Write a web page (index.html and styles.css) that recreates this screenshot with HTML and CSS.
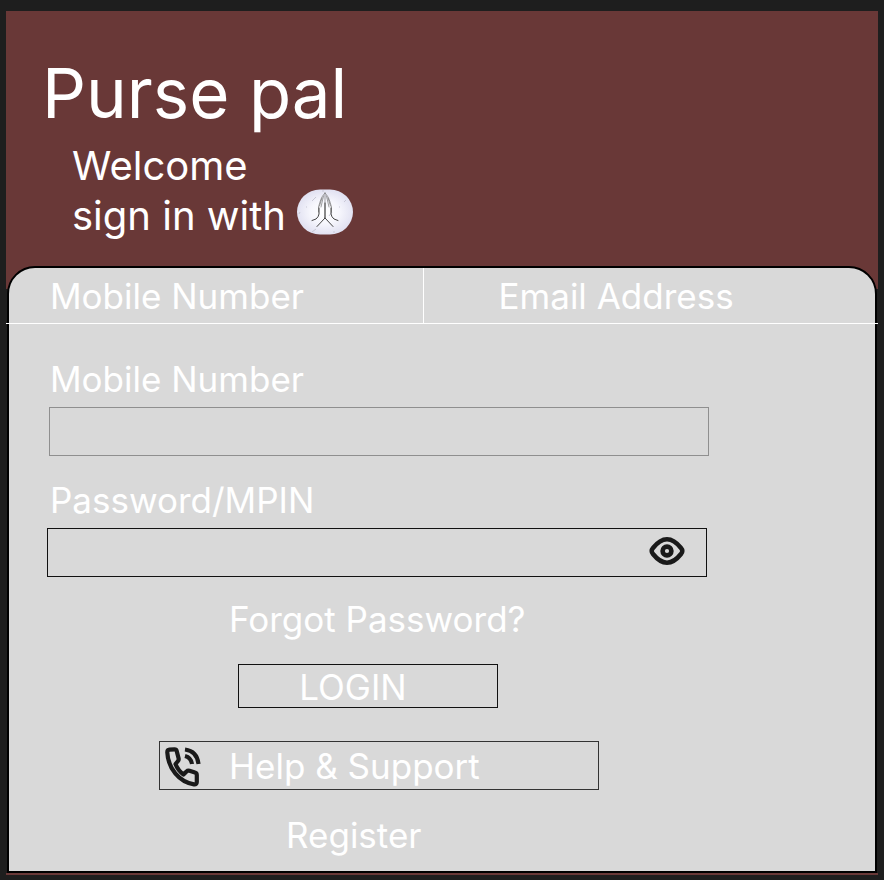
FILE: index.html
```html
<!DOCTYPE html>
<html lang="en">
<head>
<meta charset="utf-8">
<meta name="viewport" content="width=device-width, initial-scale=1">
<title>Purse pal</title>
<link rel="stylesheet" href="styles.css">
</head>
<body>
<div class="screen">
  <header class="hero">
    <h1 class="brand">Purse pal</h1>
    <p class="welcome">Welcome<br>sign in with
      <svg class="namaste" viewBox="0 0 56 46" aria-hidden="true">
        <defs>
          <radialGradient id="glow"><stop offset="0" stop-color="#fff"/><stop offset=".5" stop-color="#f7f7fd"/><stop offset="1" stop-color="#e2e2f2"/></radialGradient>
        </defs>
        <rect width="56" height="45" y=".5" rx="23" ry="22.500" fill="url(#glow)"/>
        <path d="M15 12l4-4M15 43l4-3M32 27l3-4M47 13l2-2M9 18h1M42 18h1M36 43h2M25 2h2M2 25l1-2" fill="none" stroke="#c9c9d6"/>
        <g fill="none" stroke-linecap="round" stroke-linejoin="round">
          <path d="M28 4V29M28 4C26 6 24 9 23 13L21.500 18V23M28 4C30 6 32 9 33 13L34.500 18V23M26.500 7L24 18M29.500 7L32 18M25 9L22.500 17M31 9L33.500 17" stroke="#777" stroke-width=".7"/>
          <path d="M22 19V25Q21.500 28 19 30L15 31.500M34 19V25Q34.500 28 37 30L41 31.500M28 14V29L20 37.500M28 29L36 37.500" stroke="#444"/>
        </g>
      </svg>
    </p>
  </header>
  <main class="panel">
    <div class="tabs">
      <button class="tab" type="button">Mobile Number</button>
      <button class="tab tab-email" type="button">Email Address</button>
    </div>
    <form class="form">
      <label class="label" for="mobile">Mobile Number</label>
      <input class="field field-mobile" id="mobile" type="tel">
      <label class="label" for="password">Password/MPIN</label>
      <div class="password">
        <input class="field" id="password" type="password">
        <button class="reveal" type="button" aria-label="Show password">
          <svg viewBox="0 0 36 28" width="36" height="28" fill="none" stroke="#1a1a1a" stroke-width="4.600" stroke-linejoin="round">
            <path d="M2.700 14Q2.700 12.500 4 11C8 6 13 2.300 18 2.300S28 6 32 11Q33.300 12.500 33.300 14T32 17C28 22 23 25.700 18 25.700S8 22 4 17Q2.700 15.500 2.700 14Z"/>
            <circle cx="18" cy="14" r="4.400"/>
          </svg>
        </button>
      </div>
      <a class="link forgot" href="#">Forgot Password?</a>
      <button class="login" type="submit">LOGIN</button>
      <button class="help" type="button">
        <svg viewBox="0 0 36 42" width="36" height="42" fill="none" stroke="#1a1a1a" stroke-width="4.200" stroke-linejoin="round" aria-hidden="true">
          <path d="M4.500 4.600L9.500 4.300Q11.300 4.300 11.700 6L13.500 13Q14 14.800 13 16L10.500 19Q13 25.500 18.500 29.500L21.500 26.500Q22.800 25.300 24.500 25.800L30 27.500Q31.800 28 31.800 30V37Q31.800 39.600 29 39.300C14 37 3 23 2.300 7.500Q2.200 4.800 4.500 4.600Z"/>
          <path d="M20 4.500Q32 6 33.500 19M20 11Q26 12.500 27 19"/>
        </svg>
        <span>Help &amp; Support</span>
      </button>
      <a class="link register" href="#">Register</a>
    </form>
  </main>
</div>
</body>
</html>
```
FILE: styles.css
```css
* {
  box-sizing: border-box;
}

body {
  margin: 0;
  background: #1e1e1e;
  color: #fff;
  font-family: Inter, "Liberation Sans", sans-serif;
  font-size: 35px;
  line-height: 44px;
}

button,
input {
  padding: 0;
  border: 0;
  border-radius: 0;
  background: none;
  color: inherit;
  font: inherit;
}

.screen {
  margin: 11px 6px 4px;
  border-bottom: 2px solid #693837;
}

.hero {
  padding: 40px 40px 48px 36px;
  background: #693837;
}

.brand {
  margin: 0;
  font-size: 69px;
  font-weight: 400;
  line-height: 84px;
}

.welcome {
  margin: 0 0 0 30px;
  padding-top: 6px;
  font-size: 40px;
  line-height: 50px;
}

.namaste {
  width: 56px;
  height: 46px;
  margin: -4px 0;
  vertical-align: -1px;
}

.panel {
  margin: -23px 1px 0;
  border: 2px solid #000;
  border-radius: 28px 28px 0 0;
  background: #d9d9d9;
}

.tabs {
  display: flex;
  margin: 0 -3px;
  border-bottom: 1px solid #fff;
}

.tab {
  flex: 0 0 calc(48% - 2px);
  height: 55px;
  padding-left: 44px;
  text-align: left;
}

.tab-email {
  flex: 1;
  padding-left: 75px;
  border-left: 1px solid #fff;
}

.form {
  display: flex;
  flex-direction: column;
  padding: 33px 168px 14px 38px;
}

.label {
  padding-left: 3px;
}

.field {
  width: 100%;
  height: 49px;
  padding: 0 12px;
  border: 1px solid #111;
}

.field-mobile {
  width: auto;
  margin: 6px -2px 22px 2px;
  border-color: #8f8f8f;
}

.password {
  position: relative;
  margin-top: 6px;
}

.password .field {
  display: block;
  padding-right: 64px;
}

.reveal {
  position: absolute;
  top: 9px;
  right: 22px;
  height: 28px;
  line-height: 0;
}

.link {
  color: inherit;
  text-decoration: none;
}

.forgot {
  margin: 20px 0 0 182px;
}

.login {
  width: 260px;
  height: 44px;
  margin: 23px 0 0 191px;
  padding: 0 30px 4px 0;
  border: 1px solid #111;
}

.help {
  display: flex;
  align-items: center;
  align-self: center;
  gap: 28px;
  width: 440px;
  height: 49px;
  margin: 33px 0 23px 4px;
  padding-left: 5px;
  border: 1px solid #333;
}

.register {
  margin-left: 239px;
}
```
